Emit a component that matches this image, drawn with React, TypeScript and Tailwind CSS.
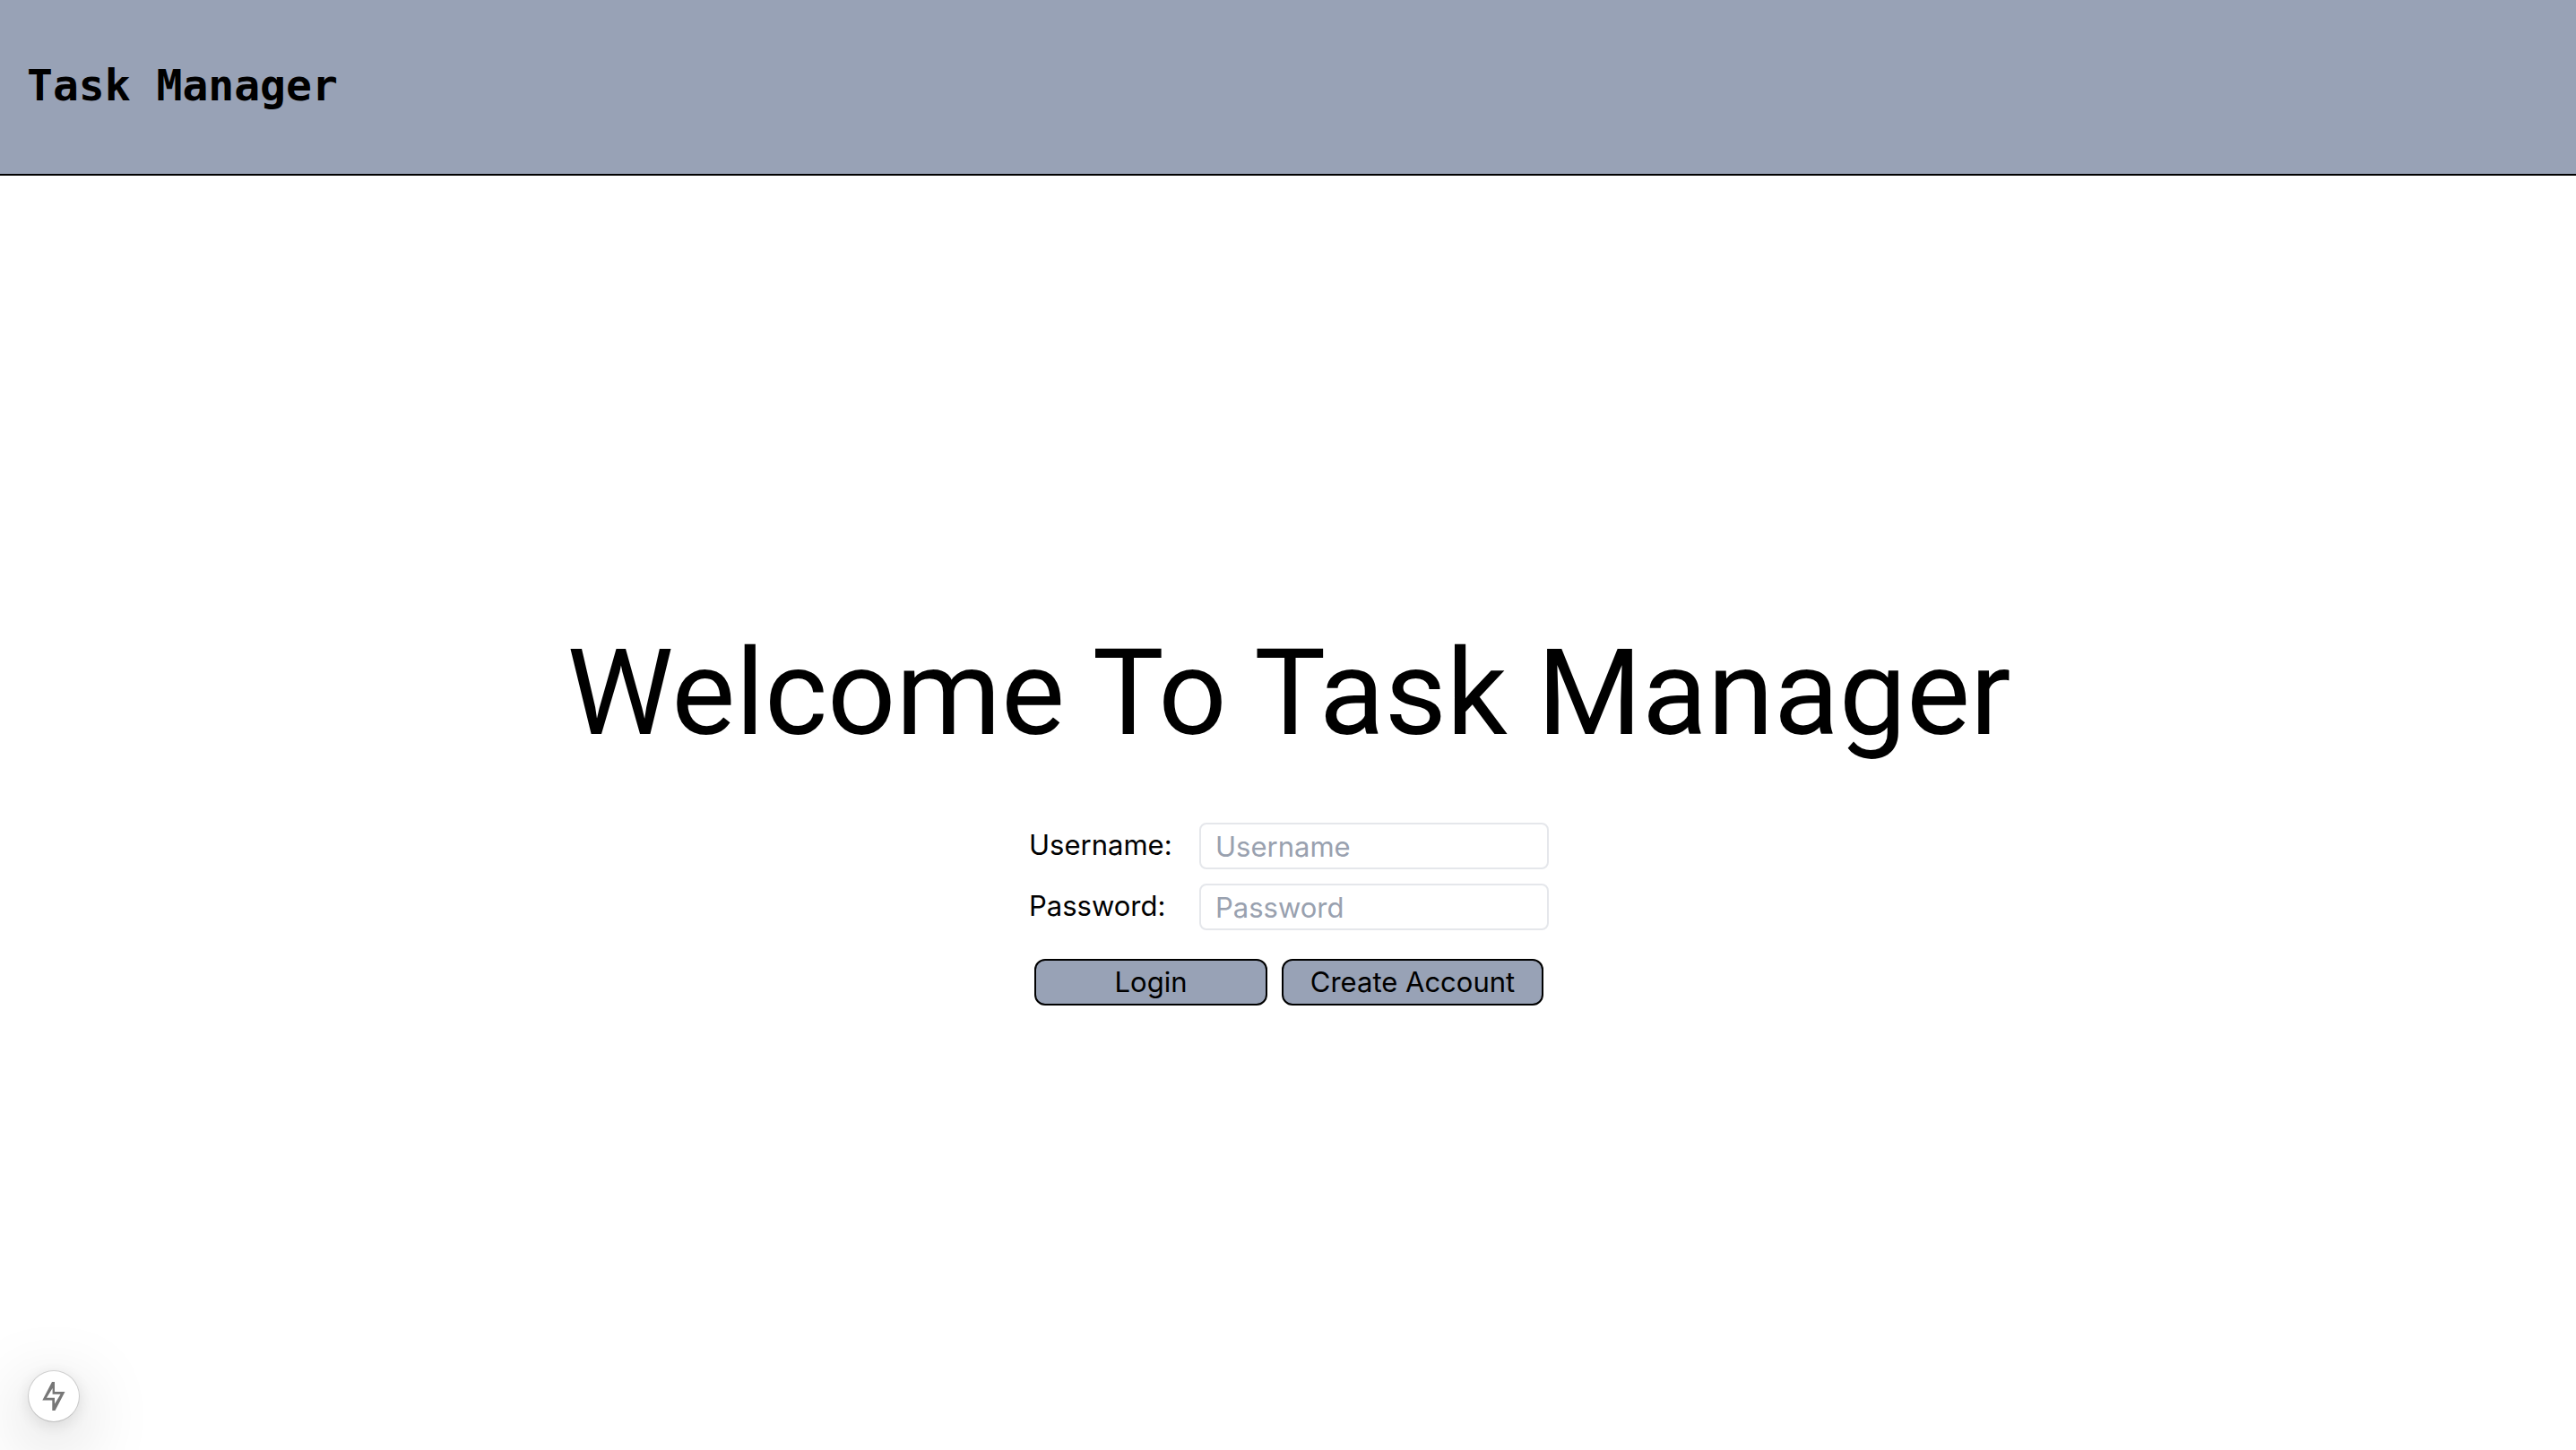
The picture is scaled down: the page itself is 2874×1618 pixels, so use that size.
const sans = "font-['Inter','Liberation_Sans',sans-serif]";

function Field({ id, label, type }: { id: string; label: string; type: string }) {
  return (
    <>
      <label htmlFor={id} className="text-[31px] leading-[50px]">
        {label}:
      </label>
      <input
        id={id}
        type={type}
        placeholder={label}
        className="h-[52px] w-[390px] rounded-lg border-2 border-gray-200 bg-white px-4 text-[31px] placeholder:text-gray-400"
      />
    </>
  );
}

function LightningIcon() {
  return (
    <svg viewBox="0 0 26 34" className="h-[34px] w-[26px]" fill="#777" fillRule="evenodd" aria-hidden="true">
      <path d="M11 1H14V12H25.5L14.5 33H11.3V21.5H0.3Z M11.6 8L5 18.8H14V25.5L20.6 14.8H11.6Z" />
    </svg>
  );
}

export default function App() {
  return (
    <div className={`flex min-h-screen flex-col bg-white text-black ${sans}`}>
      <header className="flex items-center border-b-2 border-black bg-[#98a2b6] px-[30px] pt-[59px] pb-[63px]">
        <h1 className="font-['DejaVu_Sans_Mono',monospace] text-5xl leading-[72px] font-bold">Task Manager</h1>
      </header>
      <main className="flex flex-1 flex-col items-center justify-center pt-[10px] pl-[2px]">
        <h2 className="font-['Roboto','Inter',sans-serif] text-[134px] leading-[144px]">Welcome To Task Manager</h2>
        <form className="mt-[72px] flex flex-col items-center gap-8" onSubmit={(e) => e.preventDefault()}>
          <div className="grid grid-cols-[190px_auto] gap-y-4">
            <Field id="username" label="Username" type="text" />
            <Field id="password" label="Password" type="password" />
          </div>
          <div className="flex gap-4 text-[31px] leading-[48px]">
            <button type="submit" className="w-[260px] rounded-xl border-2 border-black bg-[#98a2b6]">
              Login
            </button>
            <button type="button" className="w-[292px] rounded-xl border-2 border-black bg-[#98a2b6]">
              Create Account
            </button>
          </div>
        </form>
      </main>
      <button
        type="button"
        aria-label="Static route"
        className="fixed bottom-8 left-8 flex size-14 items-center justify-center rounded-full bg-white shadow-[0_0_0_1px_rgba(0,0,0,0.14),0_22px_80px_rgba(0,0,0,0.25),0_4px_20px_rgba(0,0,0,0.12)]"
      >
        <LightningIcon />
      </button>
    </div>
  );
}
